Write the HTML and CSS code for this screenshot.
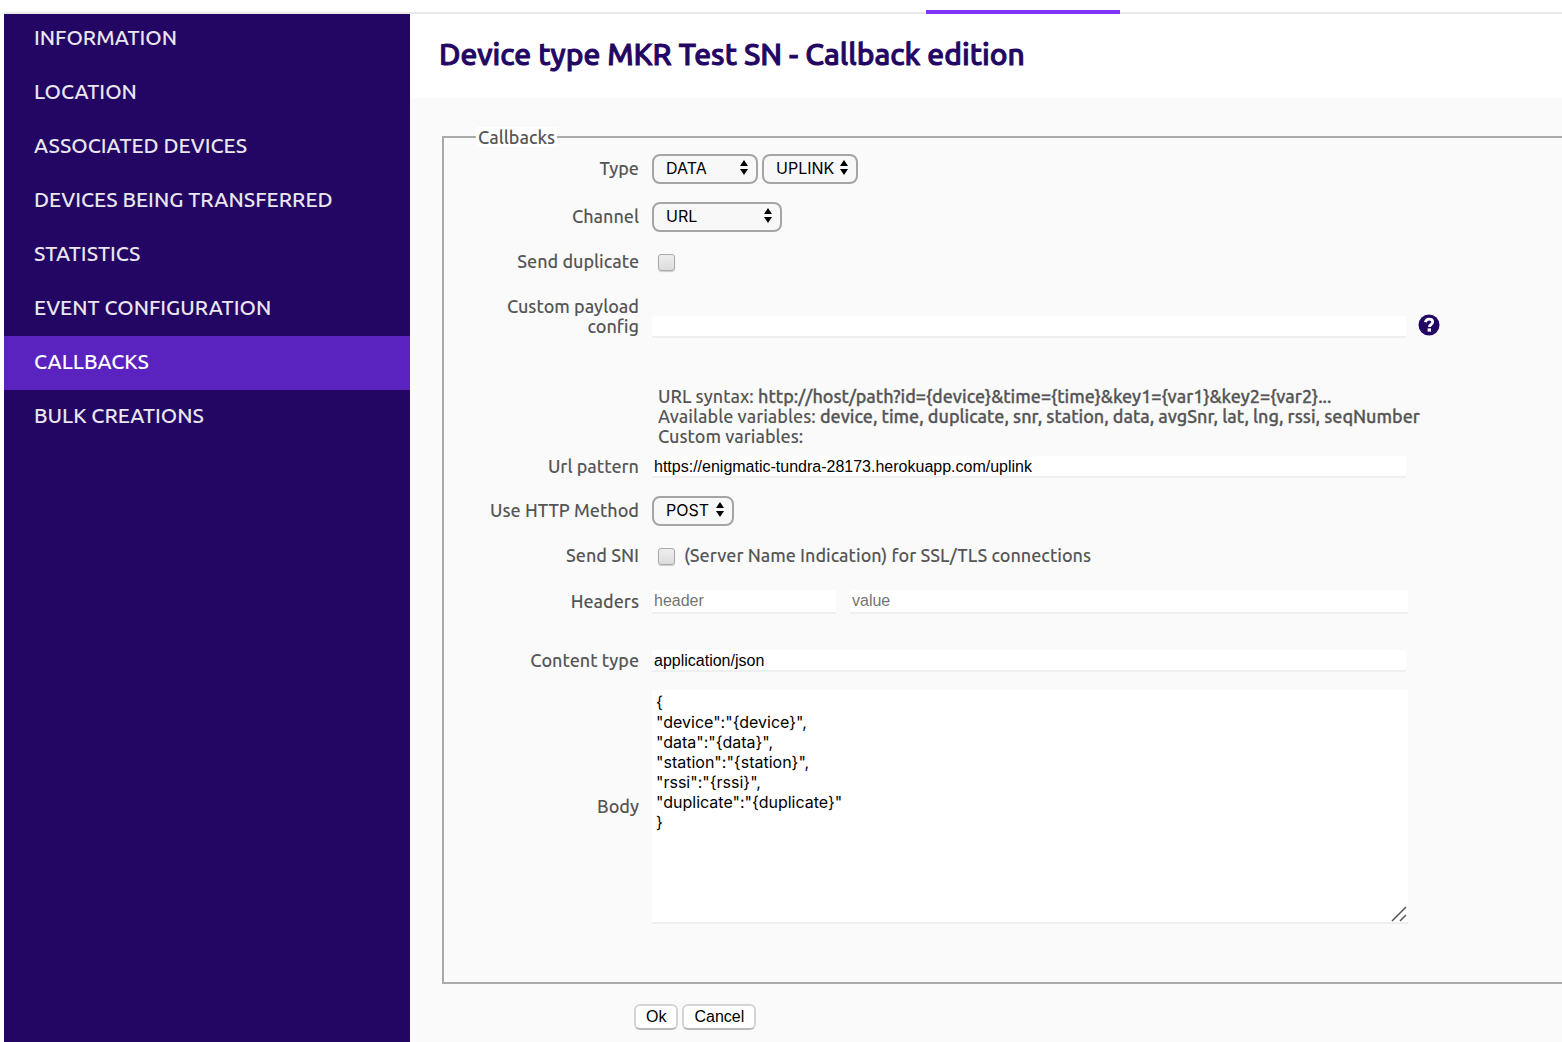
FILE: index.html
```html
<!DOCTYPE html>
<html lang="en">
<head>
<meta charset="utf-8">
<meta name="viewport" content="width=device-width, initial-scale=1">
<title>Device type MKR Test SN - Callback edition</title>
<link rel="stylesheet" href="styles.css">
</head>
<body>
<header class="topbar"><div class="active-tab"></div></header>
<div class="layout">
  <nav class="sidebar">
    <a href="#information">INFORMATION</a>
    <a href="#location">LOCATION</a>
    <a href="#devices">ASSOCIATED DEVICES</a>
    <a href="#transferred">DEVICES BEING TRANSFERRED</a>
    <a href="#statistics">STATISTICS</a>
    <a href="#events">EVENT CONFIGURATION</a>
    <a class="current" href="#callbacks">CALLBACKS</a>
    <a href="#bulk">BULK CREATIONS</a>
  </nav>
  <main class="main">
    <div class="title-band"><h1>Device type MKR Test SN - Callback edition</h1></div>
    <form class="form">
      <fieldset>
        <legend>Callbacks</legend>
        <div class="row">
          <label for="type">Type</label>
          <div class="field selects">
            <span class="select type"><select id="type"><option>DATA</option></select><svg viewBox="0 0 8 16"><path d="M4 0 8 6H0zM4 15 0 9h8z"/></svg></span>
            <span class="select direction"><select aria-label="Direction"><option>UPLINK</option></select><svg viewBox="0 0 8 16"><path d="M4 0 8 6H0zM4 15 0 9h8z"/></svg></span>
          </div>
        </div>
        <div class="row space-m">
          <label for="channel">Channel</label>
          <div class="field selects">
            <span class="select channel"><select id="channel"><option>URL</option></select><svg viewBox="0 0 8 16"><path d="M4 0 8 6H0zM4 15 0 9h8z"/></svg></span>
          </div>
        </div>
        <div class="row space-m">
          <label for="duplicate">Send duplicate</label>
          <div class="field check"><input type="checkbox" id="duplicate"></div>
        </div>
        <div class="row bottom space-l">
          <label for="payload">Custom payload config</label>
          <div class="field single"><input class="text" type="text" id="payload"></div>
          <button class="help" type="button" aria-label="Help"><svg viewBox="0 0 22 22"><circle cx="11" cy="11" r="10.5" fill="#230663"/><path d="M7.4 8.3C7.8 6.3 9.2 5.2 11.2 5.2c2 0 3.5 1.1 3.5 2.9 0 2.5-3.3 2.3-3.3 4.9" fill="none" stroke="#fff" stroke-width="2.8"/><path d="M9.6 14.4h3.4v3.2H9.6z" fill="#fff"/></svg></button>
        </div>
        <div class="row space-xl">
          <p class="hint">URL syntax: <b>http://host/path?id={device}&amp;time={time}&amp;key1={var1}&amp;key2={var2}...</b><br>Available variables: <b>device, time, duplicate, snr, station, data, avgSnr, lat, lng, rssi, seqNumber</b><br>Custom variables:</p>
        </div>
        <div class="row space-s">
          <label for="url">Url pattern</label>
          <div class="field single"><input class="text" type="text" id="url" value="https://enigmatic-tundra-28173.herokuapp.com/uplink"></div>
        </div>
        <div class="row space-m">
          <label for="method">Use HTTP Method</label>
          <div class="field selects">
            <span class="select method"><select id="method"><option>POST</option></select><svg viewBox="0 0 8 16"><path d="M4 0 8 6H0zM4 15 0 9h8z"/></svg></span>
          </div>
        </div>
        <div class="row space-m">
          <label for="sni">Send SNI</label>
          <div class="field check"><input type="checkbox" id="sni"><span>(Server Name Indication) for SSL/TLS connections</span></div>
        </div>
        <div class="row space-l">
          <label for="header">Headers</label>
          <div class="field pair"><input class="text" type="text" id="header" placeholder="header"><input class="text" type="text" placeholder="value" aria-label="Header value"></div>
        </div>
        <div class="row space-h">
          <label for="content">Content type</label>
          <div class="field single"><input class="text" type="text" id="content" value="application/json"></div>
        </div>
        <div class="row space-m">
          <label for="body">Body</label>
          <div class="field area"><textarea id="body">{
"device":"{device}",
"data":"{data}",
"station":"{station}",
"rssi":"{rssi}",
"duplicate":"{duplicate}"
}</textarea><svg class="grip" viewBox="0 0 16 16"><path d="M1 15 15 1M9 15l6-6" stroke="#555" stroke-width="1.5"/></svg></div>
        </div>
      </fieldset>
      <div class="actions"><button type="submit">Ok</button><button type="button">Cancel</button></div>
    </form>
  </main>
</div>
</body>
</html>
```
FILE: styles.css
```css
* { box-sizing: border-box; }
body {
  margin: 0;
  padding-left: 4px;
  min-height: 100vh;
  display: flex;
  flex-direction: column;
  background: #fff;
  color: #555;
  font: 500 18px/20px Ubuntu, "Noto Sans", sans-serif;
}
.topbar {
  position: relative;
  z-index: 1;
  height: 12px;
  padding: 10px 442px 0 0;
  box-shadow: 0 2px #eaeaea;
}
.active-tab {
  width: 194px;
  height: 4px;
  margin-left: auto;
  background: #8034fa;
}
.layout { flex: 1; display: flex; }
.sidebar {
  flex: 0 0 406px;
  display: flex;
  flex-direction: column;
  background: #230663;
}
.sidebar a {
  padding: 0 30px 4px;
  color: #e9e6ee;
  font-size: 21px;
  line-height: 50px;
  text-decoration: none;
}
.sidebar .current { background: #5a22be; color: #fff; }
.main { flex: 1; min-width: 0; background: #fafafa; }
.title-band { padding: 22px 29px 24px; background: #fff; }
h1 {
  margin: 0;
  color: #230663;
  font-size: 30px;
  line-height: 40px;
  font-weight: 500;
  -webkit-text-stroke: 1px;
}
.form { padding: 29px 0 12px 32px; }
fieldset {
  margin: 0;
  min-width: 0;
  padding: 7px 0 58px;
  border: 2px solid #a9a9a9;
  border-right: 0;
}
legend { margin-left: 32px; padding: 0 2px; background: #fff; }
.row {
  display: grid;
  grid-template-columns: 198px minmax(0, 756px) auto;
  column-gap: 10px;
  align-items: center;
  justify-content: start;
}
.row.bottom { align-items: end; }
.row label { padding: 0 3px 2px 40px; text-align: right; }
.space-s { margin-top: 10px; }
.space-m { margin-top: 18px; }
.space-l { margin-top: 22px; }
.space-h { margin-top: 36px; }
.space-xl { margin-top: 48px; }
.field { display: flex; }
.single { padding-right: 2px; }
.selects { gap: 4px; }
.select { position: relative; height: 30px; }
select {
  appearance: none;
  width: 100%;
  height: 30px;
  margin: 0;
  padding: 0 12px 2px;
  border: 2px solid #a5a5a5;
  border-radius: 8px;
  background: #f8f8f8;
  color: #000;
  font: 16px/20px Inter, sans-serif;
}
.select svg { position: absolute; right: 10px; top: 6px; width: 8px; height: 16px; pointer-events: none; }
.type { width: 106px; }
.direction { width: 96px; }
.channel { width: 130px; }
.method { width: 82px; }
.check { align-items: center; gap: 9px; height: 24px; padding-left: 6px; }
.check span { padding-bottom: 2px; }
.check input {
  appearance: none;
  width: 17px;
  height: 17px;
  margin: 0;
  border: 1px solid #aaa;
  border-radius: 3px;
  background: linear-gradient(#eee, #dcdcdc);
  box-shadow: 0 1px 1px #ccc;
}
.text {
  flex: 1;
  min-width: 0;
  height: 22px;
  padding: 2px 2px 0;
  border: 0;
  border-bottom: 2px solid #efefef;
  border-radius: 0;
  background: #fff;
  color: #000;
  font: 16px/18px "Liberation Sans", Arial, sans-serif;
}
.text::placeholder { color: #757575; }
.pair { gap: 14px; }
.pair .text { height: 24px; padding-top: 0; }
.pair .text:first-child { flex: 0 1 184px; }
.help { width: 22px; height: 22px; margin-bottom: 2px; padding: 0; border: 0; background: none; }
.help svg { display: block; }
.hint { grid-column: 2 / 4; margin: 0; padding-left: 6px; }
.hint b { font-weight: 500; -webkit-text-stroke: 0.3px; }
.area { position: relative; }
textarea {
  flex: 1;
  height: 234px;
  margin: 0;
  padding: 2px 4px;
  border: 0;
  border-bottom: 2px solid #efefef;
  background: #fff;
  color: #000;
  font: 16px/20px Inter, sans-serif;
  resize: none;
}
.grip { position: absolute; right: 1px; bottom: 2px; width: 16px; height: 16px; }
.actions { display: flex; gap: 4px; padding: 20px 0 0 192px; }
.actions button {
  height: 26px;
  padding: 0 10px;
  border: 2px solid #d4d4d4;
  border-bottom-color: #b9b9b9;
  border-radius: 6px;
  background: #fff;
  color: #000;
  font: 16px/20px "Liberation Sans", Arial, sans-serif;
}
```
